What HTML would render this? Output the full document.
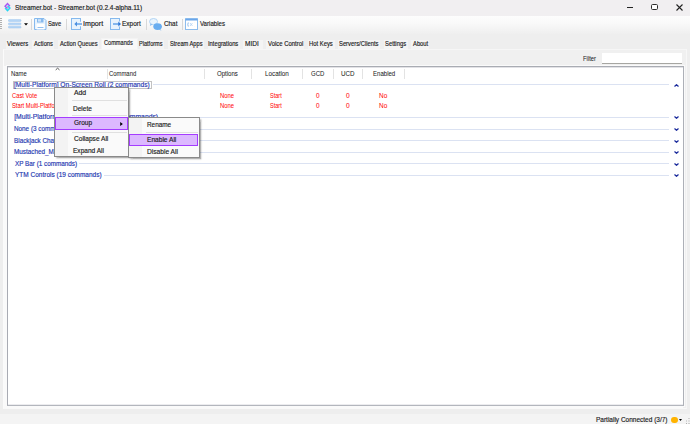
<!DOCTYPE html>
<html><head><meta charset="utf-8">
<style>
*{margin:0;padding:0;box-sizing:border-box}
html,body{width:690px;height:424px;overflow:hidden;background:#eeeeee;font-family:"Liberation Sans",sans-serif;color:#1a1a1a}
.a{position:absolute;white-space:nowrap}
.t{position:absolute;white-space:nowrap;font-size:6.8px;line-height:1;transform-origin:0 0;-webkit-text-stroke:0.15px currentColor}
#title{left:0;top:0;width:690px;height:16px;background:#f1eff1}
#tb{left:0;top:16px;width:690px;height:18px;background:linear-gradient(#fdfdfd,#f9f9f9 40%,#efefef)}
.tab{position:absolute;top:39px;height:10px;background:#f4f4f4;border:1px solid #eeeeee;border-bottom:none}
.tab.sel{top:38px;height:11px;background:#f9f9f9;border-color:#f3f3f3}
#page{left:3px;top:49px;width:684px;height:360px;background:#f0f0f0;border-left:1px solid #fbfbfb;border-top:1px solid #f6f6f6;border-right:1px solid #f7f7f7;border-bottom:1px solid #f9f9f9}
#lv{left:7px;top:66px;width:677px;height:340px;background:#fff;border-left:1px solid #a9abb3;border-top:1px solid #a9acb3;border-right:1px solid #adb0b7;border-bottom:1px solid #b3b6bd;box-shadow:inset 0 -1px 0 #ececef,inset 0 1px 0 #e2e2e6,0 0 0 1px #fafafa,-2px 1px 0 1px #fafafa}
.sep{position:absolute;top:69px;width:1px;height:10px;background:#e3e3e3}
.gl{position:absolute;height:1px;background:#dbe2f2}
.chev{position:absolute;left:674px;width:5px;height:3px}
#menu{left:54px;top:87px;width:75px;height:70px;background:#fafafa;border:1px solid #8a8a8a;box-shadow:1.5px 1.5px 1.5px rgba(0,0,0,.3);z-index:10}
#sub{left:128px;top:117px;width:72px;height:41px;background:#fafafa;border:1px solid #8a8a8a;box-shadow:1.5px 1.5px 1.5px rgba(0,0,0,.3);z-index:10}
.z{z-index:10}
.msep{position:absolute;height:1px;background:#e0e0e0;z-index:10}
.hl{position:absolute;background:#dcb8ff;border:1px solid #a43cff;z-index:10}
#status{left:0;top:414px;width:690px;height:10px;background:#f4f4f4}
</style></head><body>
<!-- title bar -->
<div class="a" id="title"></div>
<svg class="a" style="left:4px;top:2px" width="7" height="10" viewBox="0 0 7 10">
<path d="M5.9 4.2L3.5 1.6L1.1 4.2L3.5 6.5" fill="none" stroke="#a958f2" stroke-width="1.5" stroke-linejoin="miter"/>
<path d="M3.5 3.7L5.9 6.1L3.5 8.6L1.1 6.1" fill="none" stroke="#28d6f2" stroke-width="1.5"/>
<path d="M3.5 5.2L4.4 6.1" stroke="#f07ac8" stroke-width="1"/>
</svg>
<div class="a" style="left:627px;top:7px;width:6.3px;height:1.1px;background:#222"></div>
<div class="a" style="left:651px;top:4px;width:7px;height:6.3px;border:1.3px solid #2e2e2e;border-radius:1.6px;background:#fff"></div>
<svg class="a" style="left:676px;top:4px" width="7" height="7" viewBox="0 0 7 7"><path d="M0.5 0.5L6.5 6.5M6.5 0.5L0.5 6.5" stroke="#222" stroke-width="1.1"/></svg>

<!-- toolbar -->
<div class="a" id="tb"></div>
<div class="a" style="left:0;top:18px;width:2px;height:11px;background:repeating-linear-gradient(#b0b0b0 0 1px,transparent 1px 2px)"></div>
<svg class="a" style="left:8px;top:19px" width="14" height="10" viewBox="0 0 14 10">
<rect x="0.3" y="0.6" width="12.8" height="1.9" rx="0.8" fill="#b6d6f6" stroke="#94c0ee" stroke-width="0.4"/>
<rect x="0.3" y="3.9" width="12.8" height="1.9" rx="0.8" fill="#b6d6f6" stroke="#94c0ee" stroke-width="0.4"/>
<rect x="0.3" y="7.2" width="12.8" height="1.9" rx="0.8" fill="#b6d6f6" stroke="#94c0ee" stroke-width="0.4"/>
</svg>
<svg class="a" style="left:24px;top:22.5px" width="4" height="3" viewBox="0 0 4 3"><path d="M0 0.3H4L2 2.6Z" fill="#000"/></svg>
<div class="a" style="left:31px;top:18.5px;width:1px;height:11px;background:#d8d8d8"></div>
<svg class="a" style="left:34px;top:18px" width="13" height="12" viewBox="0 0 13 12">
<path d="M0.5 0.5H10L12 2.5V11.5H0.5Z" fill="#e8f3fd" stroke="#86b9ee" stroke-width="1"/>
<rect x="3" y="0.5" width="6.5" height="4" fill="#86b9ee"/>
<rect x="4" y="1.2" width="3" height="2.4" fill="#cfe4fa"/>
<rect x="2.5" y="6" width="8" height="5.5" fill="#ffffff"/>
<path d="M3.5 9.5H9.5" stroke="#86b9ee" stroke-width="0.9"/>
</svg>
<div class="a" style="left:66px;top:18.5px;width:1px;height:11px;background:#d8d8d8"></div>
<svg class="a" style="left:71px;top:18px" width="11" height="12" viewBox="0 0 11 12">
<path d="M9.5 3.5V0.5H0.5V11.5H9.5V8.5" fill="#e8f3fd" stroke="#86b9ee" stroke-width="1"/>
<rect x="1" y="1" width="8" height="10" fill="#e8f3fd"/>
<path d="M9.5 0.5V3.5M9.5 8.5V11.5M0.5 0.5V11.5M0 0.5H10M0 11.5H10" stroke="#86b9ee" stroke-width="1"/>
<path d="M11 6H5" stroke="#5a9be6" stroke-width="1.4"/>
<path d="M3.3 6L6 3.6V8.4Z" fill="#4a8fe0"/>
</svg>
<svg class="a" style="left:110px;top:18px" width="12" height="12" viewBox="0 0 12 12">
<rect x="1" y="1" width="8.5" height="10" fill="#e8f3fd"/>
<path d="M9.5 0.5V3.5M9.5 8.5V11.5M0.5 0.5V11.5M0 0.5H10M0 11.5H10" stroke="#86b9ee" stroke-width="1"/>
<path d="M3 6H9" stroke="#5a9be6" stroke-width="1.4"/>
<path d="M11 6L8.3 3.6V8.4Z" fill="#2f78d8"/>
</svg>
<div class="a" style="left:146px;top:18.5px;width:1px;height:11px;background:#d8d8d8"></div>
<svg class="a" style="left:149px;top:17.5px" width="14" height="13" viewBox="0 0 14 13">
<ellipse cx="4.5" cy="3.6" rx="4" ry="3.1" fill="#eaf4fd" stroke="#a3cbf2" stroke-width="0.8"/>
<path d="M1.5 5.5L0.8 8L3.5 6.5Z" fill="#8cbcf0"/>
<ellipse cx="8.6" cy="8.6" rx="4.3" ry="3.4" fill="#69adf0"/>
<path d="M11 11L12.6 12.8L10 11.6Z" fill="#69adf0"/>
</svg>
<div class="a" style="left:182px;top:18.5px;width:1px;height:11px;background:#d8d8d8"></div>
<svg class="a" style="left:185px;top:18px" width="13" height="12" viewBox="0 0 13 12">
<rect x="0.5" y="0.8" width="12" height="10.7" fill="#fff" stroke="#8dbcec" stroke-width="1"/>
<rect x="0.5" y="0.5" width="12" height="2" fill="#6aa6ea"/>
<path d="M3.3 4.5Q2.3 6.5 3.3 8.6M9.7 4.5V4.6M9.7 8.3V8.4" stroke="#7fb2ea" stroke-width="0.9" fill="none"/>
<path d="M5 5L7.5 8M7.5 5L5 8" stroke="#a9cdf2" stroke-width="0.7"/>
</svg>

<!-- tabs -->
<div class="tab" style="left:5px;width:25px"></div>
<div class="tab" style="left:31px;width:24px"></div>
<div class="tab" style="left:57px;width:43px"></div>
<div class="tab" style="left:139px;width:26px"></div>
<div class="tab" style="left:167px;width:38px"></div>
<div class="tab" style="left:207px;width:34px"></div>
<div class="tab" style="left:242px;width:22px"></div>
<div class="tab" style="left:265px;width:40px"></div>
<div class="tab" style="left:307px;width:29px"></div>
<div class="tab" style="left:337px;width:44px"></div>
<div class="tab" style="left:383px;width:26px"></div>
<div class="tab" style="left:410px;width:20px"></div>
<div class="a" id="page"></div>
<div class="tab sel" style="left:101px;width:37px"></div>

<!-- filter -->
<div class="a" style="left:602px;top:53px;width:80px;height:11px;background:#fff;border-bottom:1px solid #a6a6a2"></div>

<!-- listview -->
<div class="a" id="lv"></div>
<svg class="a" style="left:55px;top:67px" width="5" height="4" viewBox="0 0 5 4"><path d="M0.7 2.9L2.6 1.2L4.5 2.9" fill="none" stroke="#555" stroke-width="1"/></svg>
<div class="sep" style="left:107px"></div>
<div class="sep" style="left:204px"></div>
<div class="sep" style="left:251px"></div>
<div class="sep" style="left:302px"></div>
<div class="sep" style="left:333px"></div>
<div class="sep" style="left:362px"></div>
<div class="sep" style="left:404px"></div>

<div class="a" style="left:13px;top:81px;width:139px;height:8px;border:1px solid #c2c2c2"></div>
<div class="gl" style="left:153px;top:84px;width:516px"></div>
<svg class="chev" style="top:84px" viewBox="0 0 5 3"><path d="M0.5 2.5L2.5 0.7L4.5 2.5" fill="none" stroke="#1a2a9c" stroke-width="1.2"/></svg>
<div class="gl" style="left:160px;top:117px;width:509px"></div>
<svg class="chev" style="top:116px" viewBox="0 0 5 3"><path d="M0.5 0.5L2.5 2.3L4.5 0.5" fill="none" stroke="#1a2a9c" stroke-width="1.2"/></svg>
<div class="gl" style="left:80px;top:129px;width:589px"></div>
<svg class="chev" style="top:128px" viewBox="0 0 5 3"><path d="M0.5 0.5L2.5 2.3L4.5 0.5" fill="none" stroke="#1a2a9c" stroke-width="1.2"/></svg>
<div class="gl" style="left:130px;top:140px;width:539px"></div>
<svg class="chev" style="top:139.5px" viewBox="0 0 5 3"><path d="M0.5 0.5L2.5 2.3L4.5 0.5" fill="none" stroke="#1a2a9c" stroke-width="1.2"/></svg>
<div class="gl" style="left:150px;top:152px;width:519px"></div>
<svg class="chev" style="top:151px" viewBox="0 0 5 3"><path d="M0.5 0.5L2.5 2.3L4.5 0.5" fill="none" stroke="#1a2a9c" stroke-width="1.2"/></svg>
<div class="gl" style="left:79px;top:163px;width:590px"></div>
<svg class="chev" style="top:162.5px" viewBox="0 0 5 3"><path d="M0.5 0.5L2.5 2.3L4.5 0.5" fill="none" stroke="#1a2a9c" stroke-width="1.2"/></svg>
<div class="gl" style="left:103.5px;top:175px;width:565.5px"></div>
<svg class="chev" style="top:174px" viewBox="0 0 5 3"><path d="M0.5 0.5L2.5 2.3L4.5 0.5" fill="none" stroke="#1a2a9c" stroke-width="1.2"/></svg>

<!-- context menu -->
<div class="a" id="menu"></div>
<div class="a z" style="left:55px;top:88px;width:13px;height:68px;background:#f3f3f3"></div>
<div class="msep" style="left:72px;top:100px;width:55px"></div>
<div class="msep" style="left:72px;top:115px;width:55px"></div>
<div class="hl" style="left:55px;top:117px;width:73px;height:13px"></div>
<svg class="a" style="left:119.5px;top:121.5px;z-index:11" width="3" height="4" viewBox="0 0 3 4"><path d="M0.2 0L2.8 2L0.2 4Z" fill="#000"/></svg>
<div class="msep" style="left:72px;top:131.5px;width:55px"></div>

<!-- submenu -->
<div class="a" id="sub"></div>
<div class="a z" style="left:129px;top:118px;width:13px;height:39px;background:#f3f3f3"></div>
<div class="msep" style="left:146px;top:132px;width:52px"></div>
<div class="hl" style="left:129px;top:134px;width:69px;height:12px"></div>

<!-- status bar -->
<div class="a" id="status"></div>
<div class="a" style="left:671.2px;top:416.8px;width:6.6px;height:6.6px;background:#ffb300;border-radius:50%"></div>
<svg class="a" style="left:679.3px;top:419px" width="3" height="2" viewBox="0 0 3 2"><path d="M0 0H3L1.5 2Z" fill="#000"/></svg>
<svg class="a" style="left:684px;top:417px" width="6" height="7" viewBox="0 0 6 7"><rect x="4.5" y="1" width="1" height="1" fill="#b0b0b0"/><rect x="4.5" y="3.5" width="1" height="1" fill="#a8a8a8"/><rect x="2" y="3.5" width="1" height="1" fill="#b8b8b8"/><rect x="4.5" y="6" width="1" height="1" fill="#a8a8a8"/><rect x="2" y="6" width="1" height="1" fill="#b0b0b0"/></svg>

<div class="t" style="left:14.96px;top:5px;color:#1a1a1a;transform:scaleX(0.954)">Streamer.bot - Streamer.bot (0.2.4-alpha.11)</div>
<div class="t" style="left:48.49px;top:21px;color:#1a1a1a;transform:scaleX(0.847)">Save</div>
<div class="t" style="left:83.35px;top:21px;color:#1a1a1a;transform:scaleX(1.047)">Import</div>
<div class="t" style="left:122.32px;top:21px;color:#1a1a1a;transform:scaleX(0.952)">Export</div>
<div class="t" style="left:163.77px;top:21px;color:#1a1a1a;transform:scaleX(0.935)">Chat</div>
<div class="t" style="left:199.60px;top:21px;color:#1a1a1a;transform:scaleX(0.898)">Variables</div>
<div class="t" style="left:6.80px;top:41px;color:#1a1a1a;transform:scaleX(0.884)">Viewers</div>
<div class="t" style="left:34.20px;top:41px;color:#1a1a1a;transform:scaleX(0.850)">Actions</div>
<div class="t" style="left:60.00px;top:41px;color:#1a1a1a;transform:scaleX(0.845)">Action Queues</div>
<div class="t" style="left:104.39px;top:40px;color:#1a1a1a;transform:scaleX(0.826)">Commands</div>
<div class="t" style="left:139.49px;top:41px;color:#1a1a1a;transform:scaleX(0.818)">Platforms</div>
<div class="t" style="left:169.59px;top:41px;color:#1a1a1a;transform:scaleX(0.836)">Stream Apps</div>
<div class="t" style="left:208.47px;top:41px;color:#1a1a1a;transform:scaleX(0.852)">Integrations</div>
<div class="t" style="left:245.12px;top:41px;color:#1a1a1a;transform:scaleX(0.958)">MIDI</div>
<div class="t" style="left:268.00px;top:41px;color:#1a1a1a;transform:scaleX(0.875)">Voice Control</div>
<div class="t" style="left:309.27px;top:41px;color:#1a1a1a;transform:scaleX(0.863)">Hot Keys</div>
<div class="t" style="left:339.39px;top:41px;color:#1a1a1a;transform:scaleX(0.857)">Servers/Clients</div>
<div class="t" style="left:384.99px;top:41px;color:#1a1a1a;transform:scaleX(0.858)">Settings</div>
<div class="t" style="left:412.60px;top:41px;color:#1a1a1a;transform:scaleX(0.856)">About</div>
<div class="t" style="left:583.07px;top:56px;color:#1a1a1a;transform:scaleX(0.862);-webkit-text-stroke:0.04px currentColor">Filter</div>
<div class="t" style="left:10.97px;top:71px;color:#1a1a1a;transform:scaleX(0.865);-webkit-text-stroke:0.04px currentColor">Name</div>
<div class="t" style="left:108.88px;top:71px;color:#1a1a1a;transform:scaleX(0.867);-webkit-text-stroke:0.04px currentColor">Command</div>
<div class="t" style="left:216.98px;top:71px;color:#1a1a1a;transform:scaleX(0.890);-webkit-text-stroke:0.04px currentColor">Options</div>
<div class="t" style="left:265.24px;top:71px;color:#1a1a1a;transform:scaleX(0.929);-webkit-text-stroke:0.04px currentColor">Location</div>
<div class="t" style="left:311.28px;top:71px;color:#1a1a1a;transform:scaleX(0.885);-webkit-text-stroke:0.04px currentColor">GCD</div>
<div class="t" style="left:341.34px;top:71px;color:#1a1a1a;transform:scaleX(0.919);-webkit-text-stroke:0.04px currentColor">UCD</div>
<div class="t" style="left:372.56px;top:71px;color:#1a1a1a;transform:scaleX(0.890);-webkit-text-stroke:0.04px currentColor">Enabled</div>
<div class="t" style="left:14.23px;top:82px;color:#1d36b0;transform:scaleX(0.974)">[Multi-Platform] On-Screen Roll (2 commands)</div>
<div class="t" style="left:11.79px;top:93px;color:#ff0a0a;transform:scaleX(0.852);-webkit-text-stroke:0.04px currentColor">Cast Vote</div>
<div class="t" style="left:220.27px;top:93px;color:#ff0a0a;transform:scaleX(0.865);-webkit-text-stroke:0.04px currentColor">None</div>
<div class="t" style="left:270.40px;top:93px;color:#ff0a0a;transform:scaleX(0.814);-webkit-text-stroke:0.04px currentColor">Start</div>
<div class="t" style="left:315.66px;top:93px;color:#ff0a0a;transform:scaleX(0.948);-webkit-text-stroke:0.04px currentColor">0</div>
<div class="t" style="left:345.76px;top:93px;color:#ff0a0a;transform:scaleX(0.978);-webkit-text-stroke:0.04px currentColor">0</div>
<div class="t" style="left:378.92px;top:93px;color:#ff0a0a;transform:scaleX(0.950);-webkit-text-stroke:0.04px currentColor">No</div>
<div class="t" style="left:11.79px;top:103px;color:#ff0a0a;transform:scaleX(0.852);-webkit-text-stroke:0.04px currentColor">Start Multi-Platform Roll</div>
<div class="t" style="left:220.27px;top:103px;color:#ff0a0a;transform:scaleX(0.865);-webkit-text-stroke:0.04px currentColor">None</div>
<div class="t" style="left:270.40px;top:103px;color:#ff0a0a;transform:scaleX(0.814);-webkit-text-stroke:0.04px currentColor">Start</div>
<div class="t" style="left:315.66px;top:103px;color:#ff0a0a;transform:scaleX(0.948);-webkit-text-stroke:0.04px currentColor">0</div>
<div class="t" style="left:345.76px;top:103px;color:#ff0a0a;transform:scaleX(0.978);-webkit-text-stroke:0.04px currentColor">0</div>
<div class="t" style="left:378.92px;top:103px;color:#ff0a0a;transform:scaleX(0.950);-webkit-text-stroke:0.04px currentColor">No</div>
<div class="t" style="left:14.23px;top:114px;color:#1d36b0;transform:scaleX(1.000)">[Multi-Platform] Chat Commands (3 commands)</div>
<div class="t" style="left:14.33px;top:126px;color:#1d36b0;transform:scaleX(0.931)">None (3 commands)</div>
<div class="t" style="left:14.33px;top:138px;color:#1d36b0;transform:scaleX(0.931)">Blackjack Chat Game (6 commands)</div>
<div class="t" style="left:14.33px;top:149px;color:#1d36b0;transform:scaleX(0.931)">Mustached_Maniac Commands (4 commands)</div>
<div class="t" style="left:14.68px;top:161px;color:#1d36b0;transform:scaleX(0.931)">XP Bar (1 commands)</div>
<div class="t" style="left:14.68px;top:172px;color:#1d36b0;transform:scaleX(0.955)">YTM Controls (19 commands)</div>
<div class="t" style="left:73.80px;top:90px;color:#1a1a1a;transform:scaleX(1.004);z-index:11">Add</div>
<div class="t" style="left:73.32px;top:106px;color:#1a1a1a;transform:scaleX(0.959);z-index:11">Delete</div>
<div class="t" style="left:73.56px;top:120px;color:#1a1a1a;transform:scaleX(0.958);z-index:11">Group</div>
<div class="t" style="left:73.56px;top:136px;color:#1a1a1a;transform:scaleX(0.966);z-index:11">Collapse All</div>
<div class="t" style="left:73.32px;top:148px;color:#1a1a1a;transform:scaleX(0.963);z-index:11">Expand All</div>
<div class="t" style="left:147.33px;top:122px;color:#1a1a1a;transform:scaleX(0.941);z-index:11">Rename</div>
<div class="t" style="left:147.31px;top:137px;color:#1a1a1a;transform:scaleX(0.970);z-index:11">Enable All</div>
<div class="t" style="left:147.31px;top:149px;color:#1a1a1a;transform:scaleX(0.975);z-index:11">Disable All</div>
<div class="t" style="left:595.72px;top:417px;color:#1a1a1a;transform:scaleX(0.956)">Partially Connected (3/7)</div>
</body></html>
